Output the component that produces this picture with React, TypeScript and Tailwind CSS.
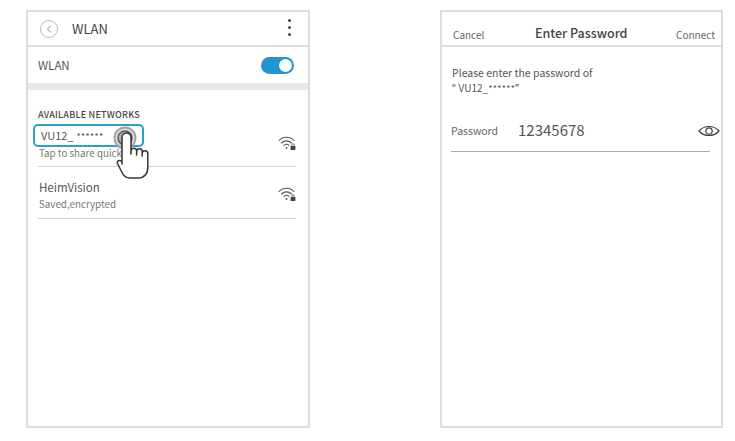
import React from 'react';
import { ChevronLeft } from 'lucide-react';

const WifiLock = () => (
  <svg width="18" height="16" viewBox="0 0 18 16" fill="none" stroke="#555" strokeWidth="1.1" strokeLinecap="round">
    <path d="M1 5.5C5 1.2 12 1.2 16 5.5" />
    <path d="M3.5 8C6.3 5.2 10.7 5.2 13.5 8" />
    <path d="M6 10.4C7.5 9 9.5 9 11 10.4" />
    <circle cx="8.5" cy="13" r="0.9" fill="#555" stroke="none" />
    <rect x="12.6" y="11" width="4.8" height="4" fill="#444" stroke="none" />
    <path d="M13.8 11V9.9a1.2 1.2 0 0 1 2.4 0V11" strokeWidth="0.8" />
  </svg>
);

const Hand = () => (
  <svg width="46" height="58" viewBox="0 0 46 58" fill="none" className="absolute left-[104px] top-[124px]">
    <circle cx="21" cy="14" r="10.5" fill="#d4d4d4" fillOpacity="0.7" stroke="#a3a3a3" strokeWidth="2" />
    <circle cx="21" cy="14" r="7" fill="#a0a0a0" fillOpacity="0.7" stroke="#555" strokeWidth="1.5" />
    <path
      d="M18 40V13.5a4.5 4.5 0 0 1 9 0V30V27a2.8 2.8 0 0 1 5.6 0V31V27.5a2.8 2.8 0 0 1 5.6 0V32V29.5a2.8 2.8 0 0 1 5.6 0V43C44.2 49.5 40 54 34 54H26C21.5 54 19 51.5 17.5 47.5L13.5 39.5C12.5 37 16 35 18 38"
      fill="#fff"
      stroke="#333"
      strokeWidth="1.5"
      strokeLinejoin="round"
      strokeLinecap="round"
    />
  </svg>
);

export default function App() {
  return (
    <div
      className="relative flex gap-[130px] w-[735px] h-[441px] bg-white pt-[10px] pl-[26px] overflow-hidden"
      style={{ fontFamily: '"Noto Sans CJK SC", "Noto Sans", sans-serif' }}
    >
      {/* WLAN screen */}
      <div className="w-[284px] h-[418px] border-2 border-[#dcdcdc] bg-white">
        <div className="flex items-center justify-between h-[35px] border-b-2 border-[#dcdcdc] pl-[12px] pr-[17px]">
          <div className="flex items-center gap-[14px]">
            <div className="flex items-center justify-center w-[18px] h-[18px] rounded-full border border-[#bbb]">
              <ChevronLeft size={12} strokeWidth={1.4} color="#555" />
            </div>
            <span className="text-[13px] text-[#444]">WLAN</span>
          </div>
          <div className="flex flex-col gap-[4px] mb-[3px]">
            <div className="w-[3px] h-[3px] rounded-full bg-[#444]" />
            <div className="w-[3px] h-[3px] rounded-full bg-[#444]" />
            <div className="w-[3px] h-[3px] rounded-full bg-[#444]" />
          </div>
        </div>
        <div className="flex items-center justify-between h-[36px] border-b-[7px] border-[#e8e8e8] box-content pl-[10px] pr-[14px]">
          <span className="text-[11.5px] text-[#555] mt-[1px]">WLAN</span>
          <div className="flex items-center justify-end w-[33px] h-[17px] rounded-full bg-[#2196d3] pr-[2px]">
            <div className="w-[13px] h-[13px] rounded-full bg-white" />
          </div>
        </div>
        <div className="pt-[18px] pl-[10px] pr-[12px]">
          <div className="text-[9px] leading-[14px] font-medium text-[#444] tracking-[0.25px]">AVAILABLE NETWORKS</div>
          <div className="flex justify-between border-b border-[#d4d4d4] h-[45px]">
            <div className="flex flex-col pt-[4px]">
              <span className="pl-[3px] text-[11px] leading-[18px] text-[#555]">
                VU12_<span className="text-[9px] tracking-[0.3px] ml-[3px]">******</span>
              </span>
              <span className="text-[9.8px] leading-[14px] text-[#777] pl-[1px]">Tap to share quick</span>
            </div>
            <div className="pt-[13px]">
              <WifiLock />
            </div>
          </div>
          <div className="flex justify-between border-b border-[#d4d4d4] h-[52px]">
            <div className="flex flex-col pt-[11px] pl-[1px]">
              <span className="text-[11.5px] leading-[18px] text-[#555]">HeimVision</span>
              <span className="text-[9.8px] leading-[16px] text-[#777]">Saved,encrypted</span>
            </div>
            <div className="pt-[19px]">
              <WifiLock />
            </div>
          </div>
        </div>
      </div>

      {/* Password screen */}
      <div className="w-[283px] h-[418px] border-2 border-[#dcdcdc] bg-white">
        <div className="flex items-end justify-between h-[35px] border-b-2 border-[#dcdcdc] pl-[11px] pr-[6px] pb-[2px]">
          <span className="text-[10px] leading-[16px] text-[#666]">Cancel</span>
          <span className="text-[12.5px] leading-[20px] font-medium text-[#444] ml-[2px]">Enter Password</span>
          <span className="text-[10px] leading-[16px] text-[#666]">Connect</span>
        </div>
        <div className="pt-[18px] pl-[10px] text-[10.5px] leading-[15px] text-[#555]">
          <div>Please enter the password of</div>
          <div className="text-[10px]">
            <span className="font-['Noto_Sans']">“</span>
            <span className="ml-[3px]">VU12_</span>
            <span className="text-[9px] tracking-[0.3px]">******</span>
            <span className="font-['Noto_Sans']">”</span>
          </div>
        </div>
        <div className="flex items-center justify-between h-[42px] mt-[14px] ml-[9px] mr-[11px] border-b border-[#aaa]">
          <div className="flex items-center">
            <span className="w-[67px] text-[10.5px] text-[#666]">Password</span>
            <span className="text-[15px] text-[#555]">12345678</span>
          </div>
          <svg width="22" height="14" viewBox="0 0 22 14" fill="none" stroke="#444" strokeWidth="1.2" className="-mr-[10px]">
            <path d="M1 7C6 1 16 1 21 7C16 13 6 13 1 7Z" />
            <circle cx="11" cy="7" r="3.2" />
          </svg>
        </div>
      </div>

      {/* Highlight around the first network, with the tapping hand on top */}
      <div className="absolute left-[33px] top-[124px] w-[111px] h-[23px] rounded-[5px] border-2 border-[#2ba0cf]" />
      <Hand />
    </div>
  );
}
